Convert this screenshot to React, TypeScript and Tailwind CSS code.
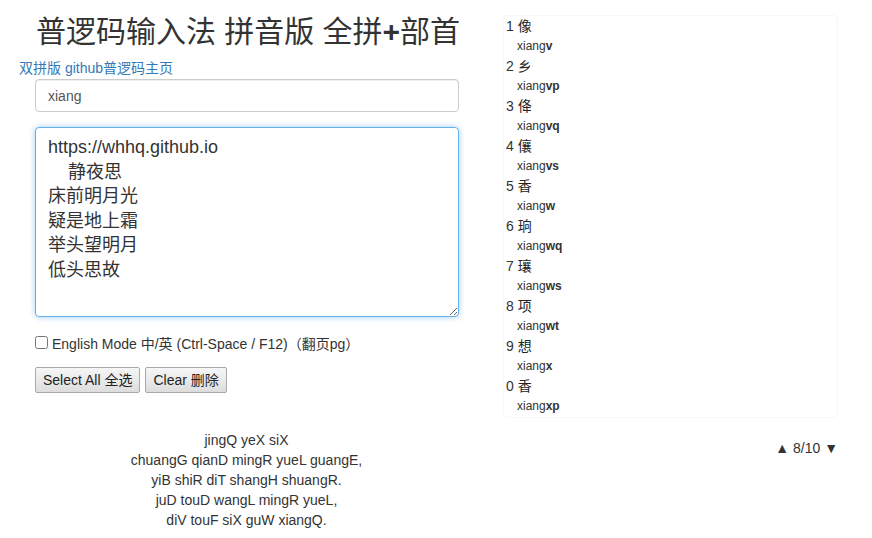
const candidates = [
  { n: "1", ch: "像", code: "v" },
  { n: "2", ch: "乡", code: "vp" },
  { n: "3", ch: "佭", code: "vq" },
  { n: "4", ch: "儴", code: "vs" },
  { n: "5", ch: "香", code: "w" },
  { n: "6", ch: "珦", code: "wq" },
  { n: "7", ch: "瓖", code: "ws" },
  { n: "8", ch: "项", code: "wt" },
  { n: "9", ch: "想", code: "x" },
  { n: "0", ch: "香", code: "xp" },
];

const poemText =
  "https://whhq.github.io\n    静夜思\n床前明月光\n疑是地上霜\n举头望明月\n低头思故";

const pinyin = [
  "jingQ yeX siX",
  "chuangG qianD mingR yueL guangE,",
  "yiB shiR diT shangH shuangR.",
  "juD touD wangL mingR yueL,",
  "diV touF siX guW xiangQ.",
];

const font = "font-['Liberation_Sans','Noto_Sans_CJK_SC',sans-serif]";

const App = () => {
  return (
    <div className={`flex w-[872px] h-[538px] bg-white text-[#333] ${font}`}>
      {/* left side */}
      <div className="w-[455px] ml-[19px] flex flex-col">
        <h2 className="text-[30px] leading-[34px] mt-[15px] text-center pl-[3px]">
          普逻码输入法 拼音版 全拼<b>+</b>部首
        </h2>
        <div className="text-[14px] leading-[20px] mt-[9px] text-[#337ab7]">
          <a>双拼版</a> <a>github普逻码主页</a>
        </div>
        <input
          className="ml-[16px] mt-[1px] w-[424px] h-[33px] border border-[#ccc] rounded-[4px] px-[12px] text-[14px] text-[#555] outline-none shadow-[inset_0_1px_1px_rgba(0,0,0,0.075)]"
          defaultValue="xiang"
        />
        <textarea
          className="ml-[16px] mt-[15px] w-[424px] h-[190px] border border-[#66afe9] rounded-[4px] px-[12px] pt-[7px] text-[18px] leading-[24.6px] text-[#333] outline-none shadow-[0_0_6px_rgba(102,175,233,0.6)]"
          defaultValue={poemText}
        />
        <label className="ml-[16px] mt-[17px] flex items-center text-[14px] leading-[20px] text-[#333]">
          <input type="checkbox" className="w-[13px] h-[13px] mr-[4px] mt-[-4px]" />
          English Mode 中/英 (Ctrl-Space / F12)（翻页pg）
        </label>
        <div className="ml-[16px] mt-[13px] flex gap-[5px]">
          <button className="h-[26px] px-[7px] text-[14px] text-[#222] border border-[#a9a9a9] rounded-[2px] bg-gradient-to-b from-[#f6f6f6] to-[#dddddd]">
            Select All 全选
          </button>
          <button className="h-[26px] px-[7px] text-[14px] text-[#222] border border-[#a9a9a9] rounded-[2px] bg-gradient-to-b from-[#f6f6f6] to-[#dddddd]">
            Clear 删除
          </button>
        </div>
        <div className="mt-[37px] text-center text-[14px] leading-[20px] text-[#333]">
          {pinyin.map((l) => (
            <div key={l}>{l}</div>
          ))}
        </div>
      </div>

      {/* right side: candidates */}
      <div className="ml-[29px] w-[335px] flex flex-col">
        <div className="mt-[15px] border border-[#f7f7f7] rounded-[4px] pl-[2px] pb-[1px]">
          {candidates.map((c) => (
            <div key={c.n + c.ch}>
              <div className="text-[14px] leading-[20px] text-[#333]">
                {c.n} <span className="text-[#222]">{c.ch}</span>
              </div>
              <div className="text-[12px] leading-[20px] pl-[11px] text-[#333]">
                xiang<b>{c.code}</b>
              </div>
            </div>
          ))}
        </div>
        <div className="mt-[20px] text-right text-[14px] leading-[20px] text-[#333]">
          ▲ 8/10 ▼
        </div>
      </div>
    </div>
  );
};

export default App;
